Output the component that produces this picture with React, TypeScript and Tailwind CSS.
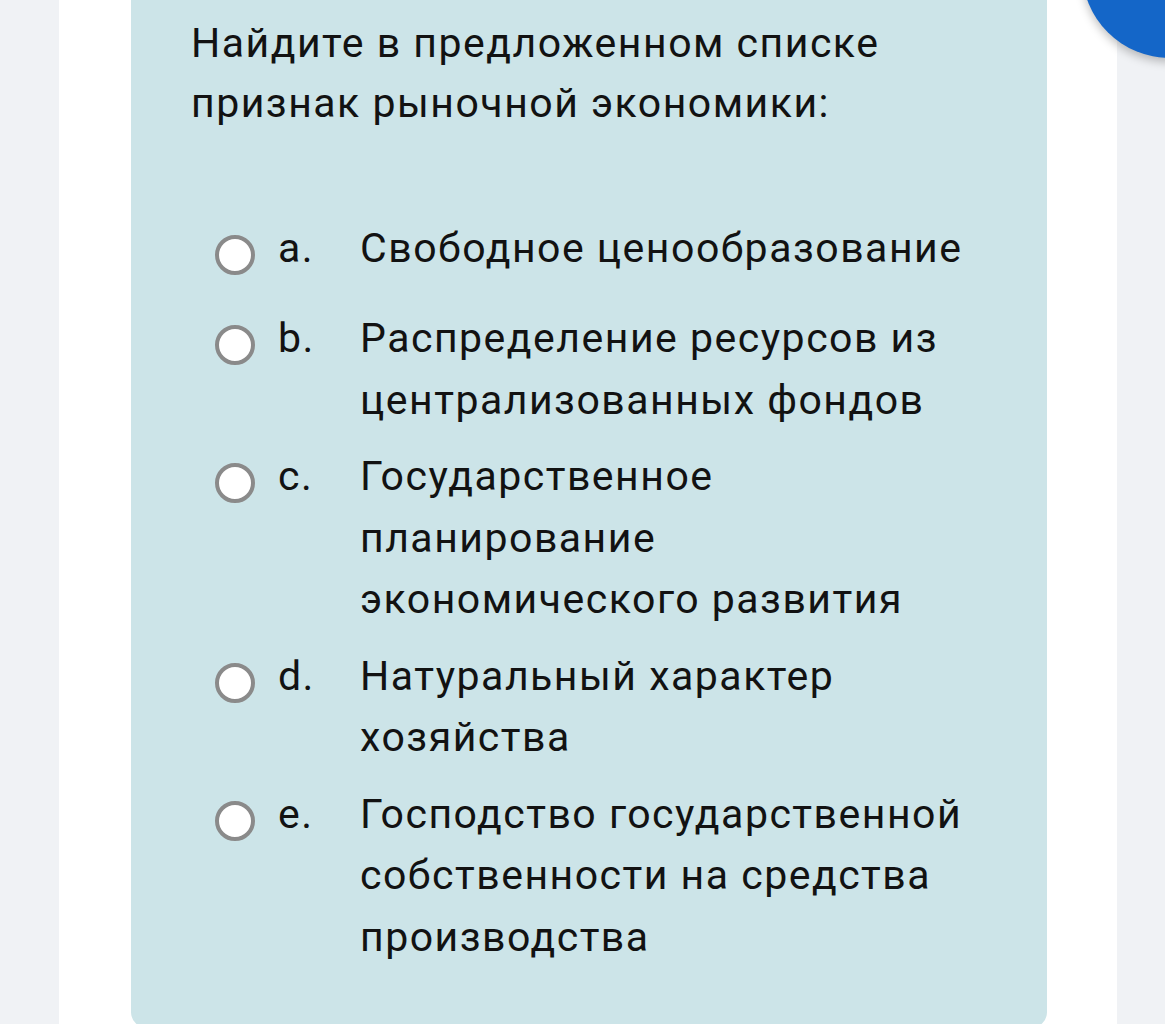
import React from "react";

const options: { letter: string; text: string }[] = [
  { letter: "a.", text: "Свободное ценообразование" },
  { letter: "b.", text: "Распределение ресурсов из централизованных фондов" },
  { letter: "c.", text: "Государственное планирование экономического развития" },
  { letter: "d.", text: "Натуральный характер хозяйства" },
  { letter: "e.", text: "Господство государственной собственности на средства производства" },
];

export default function App() {
  return (
    <div
      className="relative w-[1165px] h-[1024px] overflow-hidden bg-[#f0f2f5]"
      style={{ fontFamily: "Roboto, 'Noto Sans', sans-serif" }}
    >
      <div className="ml-[59px] w-[1058px] h-full bg-white">
        <div className="ml-[72px] w-[916px] h-[1028px] bg-[#cce4e8] rounded-b-[16px] pt-[13px] pl-[60px] pr-[60px] text-[#121212] tracking-[1.5px]">
          <div className="text-[41px] leading-[60px]">
            Найдите в предложенном списке признак рыночной экономики:
          </div>
          <div className="mt-[85px] flex flex-col gap-[15px] pl-[24px]">
            {options.map((o) => (
              <div key={o.letter} className="flex items-start">
                <div className="mt-[17px] mb-[18px] w-[40px] h-[40px] shrink-0 rounded-full border-[4px] border-[#8a8a8a] bg-white" />
                <div className="ml-[23px] w-[82px] shrink-0 text-[41px] leading-[61.5px]">{o.letter}</div>
                <div className="flex-1 text-[41px] leading-[61.5px]">{o.text}</div>
              </div>
            ))}
          </div>
        </div>
      </div>
      <div className="absolute left-[1082px] top-[-118px] w-[176px] h-[176px] rounded-full bg-[#1466c8] shadow-[0_4px_10px_rgba(0,0,0,0.25)]" />
    </div>
  );
}
